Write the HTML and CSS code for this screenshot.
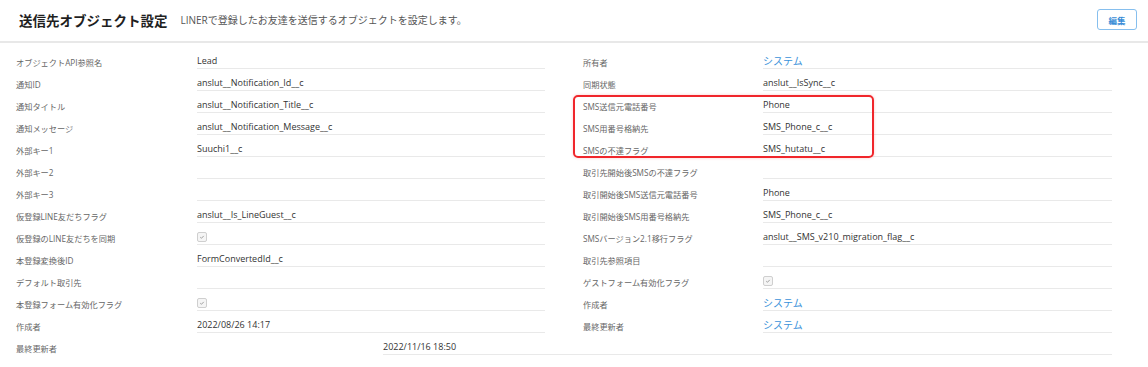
FILE: index.html
```html
<!DOCTYPE html>
<html lang="ja">
<head>
<meta charset="utf-8">
<title>送信先オブジェクト設定</title>
<link rel="stylesheet" href="styles.css">
</head>
<body>
<header class="page-header">
  <h1 class="title">送信先オブジェクト設定</h1>
  <p class="subtitle">LINERで登録したお友達を送信するオブジェクトを設定します。</p>
  <button class="edit-btn" type="button">編集</button>
</header>
<main class="content">
  <div class="columns">
    <div class="col">
      <div class="row"><span class="label">オブジェクトAPI参照名</span><span class="value">Lead</span></div>
      <div class="row"><span class="label">通知ID</span><span class="value">anslut__Notification_Id__c</span></div>
      <div class="row"><span class="label">通知タイトル</span><span class="value">anslut__Notification_Title__c</span></div>
      <div class="row"><span class="label">通知メッセージ</span><span class="value">anslut__Notification_Message__c</span></div>
      <div class="row"><span class="label">外部キー1</span><span class="value">Suuchi1__c</span></div>
      <div class="row"><span class="label">外部キー2</span><span class="value"></span></div>
      <div class="row"><span class="label">外部キー3</span><span class="value"></span></div>
      <div class="row"><span class="label">仮登録LINE友だちフラグ</span><span class="value">anslut__Is_LineGuest__c</span></div>
      <div class="row"><span class="label">仮登録のLINE友だちを同期</span><span class="value"><span class="check"><svg viewBox="0 0 10 10" width="10" height="10"><path d="M2.8 5.2 L4.3 6.6 L7.2 3.6" fill="none" stroke="#8a8a8a" stroke-width="1"/></svg></span></span></div>
      <div class="row"><span class="label">本登録変換後ID</span><span class="value">FormConvertedId__c</span></div>
      <div class="row"><span class="label">デフォルト取引先</span><span class="value"></span></div>
      <div class="row"><span class="label">本登録フォーム有効化フラグ</span><span class="value"><span class="check"><svg viewBox="0 0 10 10" width="10" height="10"><path d="M2.8 5.2 L4.3 6.6 L7.2 3.6" fill="none" stroke="#8a8a8a" stroke-width="1"/></svg></span></span></div>
      <div class="row"><span class="label">作成者</span><span class="value">2022/08/26 14:17</span></div>
    </div>
    <div class="col">
      <div class="row"><span class="label">所有者</span><span class="value"><a class="link" href="#">システム</a></span></div>
      <div class="row"><span class="label">同期状態</span><span class="value">anslut__IsSync__c</span></div>
      <div class="row"><span class="label">SMS送信元電話番号</span><span class="value">Phone</span></div>
      <div class="row"><span class="label">SMS用番号格納先</span><span class="value">SMS_Phone_c__c</span></div>
      <div class="row"><span class="label">SMSの不達フラグ</span><span class="value">SMS_hutatu__c</span></div>
      <div class="row"><span class="label">取引先開始後SMSの不達フラグ</span><span class="value"></span></div>
      <div class="row"><span class="label">取引開始後SMS送信元電話番号</span><span class="value">Phone</span></div>
      <div class="row"><span class="label">取引開始後SMS用番号格納先</span><span class="value">SMS_Phone_c__c</span></div>
      <div class="row"><span class="label">SMSバージョン2.1移行フラグ</span><span class="value">anslut__SMS_v210_migration_flag__c</span></div>
      <div class="row"><span class="label">取引先参照項目</span><span class="value"></span></div>
      <div class="row"><span class="label">ゲストフォーム有効化フラグ</span><span class="value"><span class="check"><svg viewBox="0 0 10 10" width="10" height="10"><path d="M2.8 5.2 L4.3 6.6 L7.2 3.6" fill="none" stroke="#8a8a8a" stroke-width="1"/></svg></span></span></div>
      <div class="row"><span class="label">作成者</span><span class="value"><a class="link" href="#">システム</a></span></div>
      <div class="row"><span class="label">最終更新者</span><span class="value"><a class="link" href="#">システム</a></span></div>
    </div>
  </div>
  <div class="row row-wide"><span class="label">最終更新者</span><span class="value">2022/11/16 18:50</span></div>
  <div class="highlight"></div>
</main>
</body>
</html>
```
FILE: styles.css
```css
* { box-sizing: border-box; }
html, body { margin: 0; padding: 0; background: #ffffff; }
body {
  font-family: "Open Sans", "Noto Sans CJK JP", sans-serif;
  color: #333333;
  width: 1148px;
}
.page-header {
  display: flex;
  align-items: center;
  height: 43px;
  padding: 9px 11px 11px 19px;
  border-bottom: 2px solid #e8e8e8;
}
.title {
  margin: 0;
  font-size: 13.5px;
  font-weight: 700;
  color: #1f1f1f;
  line-height: 20px;
  font-family: "Noto Sans CJK JP", sans-serif;
}
.subtitle {
  margin: 0 0 0 13px;
  font-size: 10px;
  color: #555555;
  line-height: 20px;
  flex: 1;
}
.edit-btn {
  width: 40px;
  height: 21px;
  padding: 0;
  border: 1px solid #86bfee;
  border-radius: 3px;
  background: #ffffff;
  color: #3a8cd6;
  font-family: "Noto Sans CJK JP", sans-serif;
  font-size: 8.5px;
  font-weight: 700;
}
.content {
  position: relative;
  padding: 4px 0 0 16px;
}
.columns {
  display: grid;
  grid-template-columns: 529px 529px;
  column-gap: 38px;
}
.col { display: flex; flex-direction: column; }
.row {
  display: grid;
  grid-template-columns: 181px 1fr;
  height: 22px;
}
.col + .col .row { grid-template-columns: 180px 1fr; }
.label, .value {
  display: flex;
  align-items: flex-end;
  line-height: 12px;
  white-space: nowrap;
}
.label {
  font-size: 8.2px;
  color: #666666;
}
.value {
  font-size: 9px;
  color: #333333;
  border-bottom: 1px solid #e9e9e9;
  padding-bottom: 1px;
}
.link {
  color: #3b92da;
  text-decoration: none;
  font-size: 10px;
  font-family: "Noto Sans CJK JP", sans-serif;
}
.check {
  display: inline-flex;
  width: 10px;
  height: 10px;
  border: 1px solid #cfcfcf;
  border-radius: 2px;
  background: #f5f5f5;
  align-items: center;
  justify-content: center;
  margin-bottom: 1px;
}
.check svg { display: block; width: 8px; height: 8px; }
.row-wide {
  grid-template-columns: 367px 729px;
}
.highlight {
  position: absolute;
  left: 573px;
  top: 52px;
  width: 301px;
  height: 63px;
  border: 2px solid #f0262b;
  border-radius: 5px;
  box-shadow: 0 0 3px rgba(240, 38, 43, 0.25);
  pointer-events: none;
}
```
